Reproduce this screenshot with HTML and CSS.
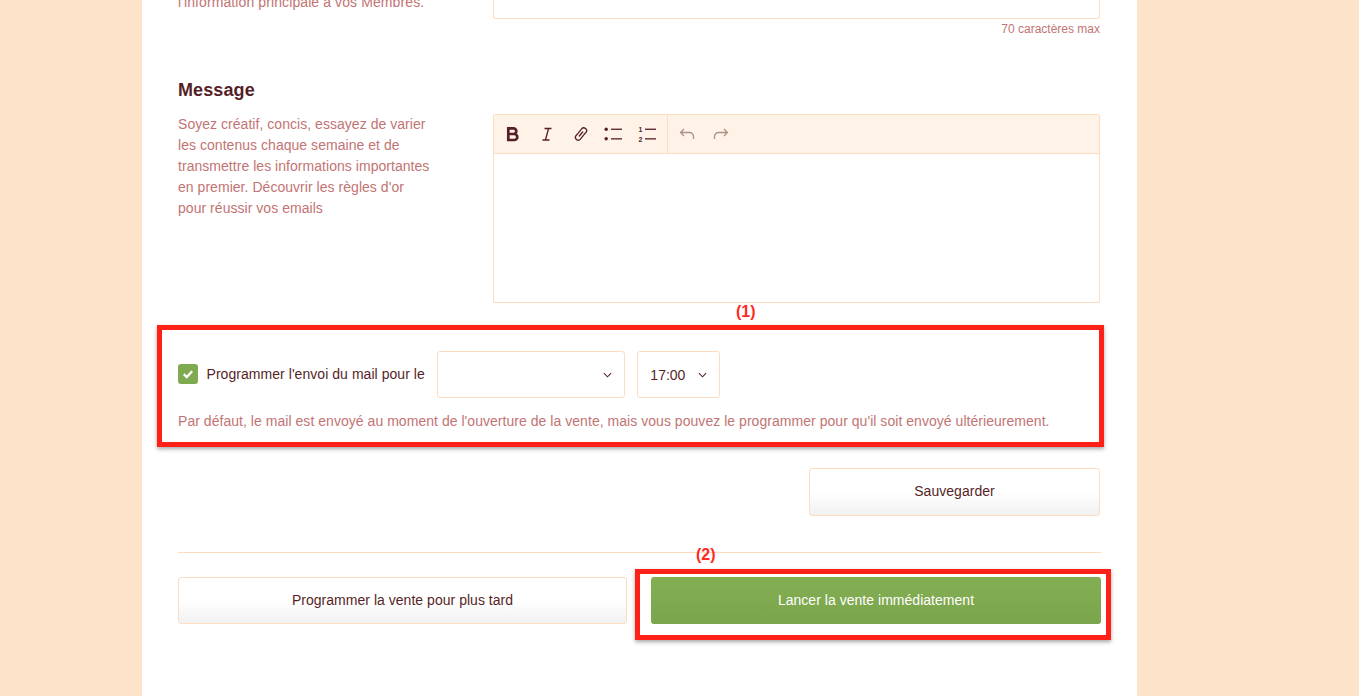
FILE: index.html
```html
<!DOCTYPE html>
<html lang="fr">
<head>
<meta charset="utf-8">
<title>Message</title>
<link rel="stylesheet" href="styles.css">
</head>
<body>
<main class="card">
  <section class="row top-row">
    <p class="help top-help">l'information principale à vos Membres.</p>
    <div class="field">
      <div class="subject-input"></div>
      <p class="counter">70 caractères max</p>
    </div>
  </section>

  <section class="row message-row">
    <div class="side">
      <h2 class="title">Message</h2>
      <p class="help">Soyez créatif, concis, essayez de varier les contenus chaque semaine et de transmettre les informations importantes en premier. Découvrir les règles d'or pour réussir vos emails</p>
    </div>
    <div class="editor">
      <div class="toolbar">
        <div class="tool-group">
          <svg class="icon" viewBox="0 0 16 16"><path d="M3.300 2.400h5.200a2.800 2.800 0 0 1 0 5.600H3.300zM3.300 8h6a3 3 0 0 1 0 6H3.300z" fill="none" stroke="#561f27" stroke-width="2.700"/></svg>
          <svg class="icon" viewBox="0 0 16 16"><path d="M5.500 2.500h7M3.500 14h7M9.600 2.500 6.400 14" fill="none" stroke="#561f27" stroke-width="1.300"/></svg>
          <svg class="icon" viewBox="0 0 16 16"><g fill="none" stroke="#561f27" stroke-width="1.300" stroke-linecap="round"><path d="M5.600 6.600 8.600 2.900a2.800 2.800 0 0 1 4.300 3.600L11 8.500"/><path d="M5 7.500 3.100 9.500a2.800 2.800 0 0 0 4.300 3.600l3-3.700"/><path d="M9.700 6 6.300 10"/></g></svg>
          <svg class="icon wide" viewBox="0 0 20 16"><g fill="#561f27"><circle cx="3.200" cy="3.200" r="1.700"/><circle cx="3.200" cy="12.800" r="1.700"/><rect x="8" y="2.600" width="11" height="1.300"/><rect x="8" y="12.200" width="11" height="1.300"/></g></svg>
          <svg class="icon wide" viewBox="0 0 20 16"><g fill="#561f27"><rect x="8" y="2.600" width="11" height="1.300"/><rect x="8" y="12.200" width="11" height="1.300"/><text class="num" x="1.500" y="6">1</text><text class="num" x="1.500" y="15.500">2</text></g></svg>
        </div>
        <div class="tool-group muted">
          <svg class="icon" viewBox="0 0 16 16"><path d="M5 3 1.500 6.500 5 10M1.500 6.500h9a4 4 0 0 1 4 4V13" fill="none" stroke="#ab9188" stroke-width="1.300"/></svg>
          <svg class="icon" viewBox="0 0 16 16"><path d="M11 3l3.500 3.500L11 10M14.500 6.500h-9a4 4 0 0 0-4 4V13" fill="none" stroke="#ab9188" stroke-width="1.300"/></svg>
        </div>
      </div>
      <div class="editor-body"></div>
    </div>
  </section>

  <section class="schedule">
    <div class="schedule-line">
      <span class="checkbox"><svg viewBox="0 0 12 12"><path d="M1.800 6.200 4.700 9 10.200 3.200" fill="none" stroke="#fff" stroke-width="2.300"/></svg></span>
      <span class="schedule-label">Programmer l'envoi du mail pour le</span>
      <div class="select date-select"><svg class="chevron" viewBox="0 0 10 6"><path d="M1 1l4 4 4-4" fill="none" stroke="#561f27" stroke-width="1.200"/></svg></div>
      <div class="select time-select"><span>17:00</span><svg class="chevron" viewBox="0 0 10 6"><path d="M1 1l4 4 4-4" fill="none" stroke="#561f27" stroke-width="1.200"/></svg></div>
    </div>
    <p class="help schedule-note">Par défaut, le mail est envoyé au moment de l'ouverture de la vente, mais vous pouvez le programmer pour qu'il soit envoyé ultérieurement.</p>
  </section>

  <div class="save-line"><button class="btn save-btn">Sauvegarder</button></div>
  <hr class="divider">
  <div class="actions">
    <button class="btn">Programmer la vente pour plus tard</button>
    <button class="btn primary">Lancer la vente immédiatement</button>
  </div>
</main>

<div class="mark mark-one"></div>
<span class="mark-label label-one">(1)</span>
<div class="mark mark-two"></div>
<span class="mark-label label-two">(2)</span>
</body>
</html>
```
FILE: styles.css
```css
* { box-sizing: border-box; }
html, body { margin: 0; height: 696px; overflow: hidden; }
body {
  background: #fee3cb;
  font-family: "Liberation Sans", Arial, sans-serif;
  color: #561f27;
  position: relative;
}
.card {
  width: 995px;
  height: 696px;
  margin-left: 142px;
  padding: 0 36px;
  background: #fff;
  overflow: hidden;
}
.row { display: flex; }
.help {
  margin: 0;
  font-size: 14px;
  line-height: 21px;
  color: #c27474;
}
.top-row { margin-top: -37px; height: 74px; }
.top-help { width: 315px; padding-top: 29px; flex: none; letter-spacing: .1px; }
.field { width: 607px; flex: none; }
.subject-input {
  height: 56px;
  border: 1px solid #fddcbf;
  border-top: 0;
  border-radius: 0 0 3px 3px;
}
.counter { margin: 3px 0 0; text-align: right; font-size: 12px; line-height: 15px; color: #c27474; }
.message-row { margin-top: 43px; }
.side { width: 315px; flex: none; padding-right: 60px; }
.side .help { letter-spacing: .04px; }
.title { margin: -1px 0 13px; font-size: 18px; line-height: 22px; font-weight: 700; letter-spacing: .1px; color: #561f27; }
.editor { width: 607px; height: 189px; margin-top: 34px; border: 1px solid #fddcbf; border-radius: 2px; flex: none; }
.toolbar { display: flex; height: 39px; background: #fff2e7; border-bottom: 1px solid #fddcbf; }
.tool-group { display: flex; align-items: center; gap: 18px; padding: 0 10px 0 11px; border-right: 1px solid #fddcbf; }
.tool-group.muted { border-right: 0; }
.icon { width: 16px; height: 16px; display: block; }
.icon.wide { width: 20px; margin-left: -4px; }
.num { font: 700 7px "Liberation Sans", Arial, sans-serif; }
.editor-body { height: 148px; }
.schedule { height: 165px; padding-top: 48px; }
.schedule-line { display: flex; align-items: center; }
.checkbox { width: 20px; height: 20px; margin-bottom: 1px; background: #7faa50; border-radius: 3px; display: flex; align-items: center; justify-content: center; }
.checkbox svg { width: 12px; height: 12px; }
.schedule-label { margin: 0 12.500px 2px 8.500px; font-size: 14px; letter-spacing: .05px; color: #561f27; }
.select { height: 47px; border: 1px solid #fddcbf; border-radius: 3px; display: flex; align-items: center; justify-content: flex-end; font-size: 14px; }
.date-select { width: 188px; padding-right: 12px; }
.time-select { width: 83px; margin-left: 12px; padding: 0 12px; justify-content: space-between; }
.chevron { width: 9px; height: 6px; display: block; }
.schedule-note { margin-top: 13px; letter-spacing: .04px; }
.save-line { display: flex; justify-content: flex-end; padding-right: 1px; }
.btn {
  height: 47px;
  border: 1px solid #fddcbf;
  border-radius: 3px;
  background: linear-gradient(#fff 50%, #f1f1f1);
  font: 14px "Liberation Sans", Arial, sans-serif;
  letter-spacing: .03px;
  color: #561f27;
  padding: 0 0 2px;
}
.save-btn { width: 291px; height: 48px; }
.divider { margin: 36px 0 24px; border: 0; border-top: 1px solid #fddcbf; }
.actions { display: flex; gap: 24px; }
.actions .btn { width: 449px; }
.actions .primary { width: 450px; background: linear-gradient(#84ae53, #7ba54c); border: 0; color: #fff; }
.mark {
  position: absolute;
  border: 5px solid #ff2117;
  box-shadow: 0 2px 4px rgba(0, 0, 0, .35);
}
.mark-one { left: 157px; top: 325px; width: 947px; height: 122px; }
.mark-two { left: 635px; top: 569px; width: 476px; height: 71px; }
.mark-label { position: absolute; font-size: 16px; line-height: 18px; font-weight: 700; color: #ff2a22; }
.label-one { left: 736px; top: 303px; }
.label-two { left: 696px; top: 546px; }
```
